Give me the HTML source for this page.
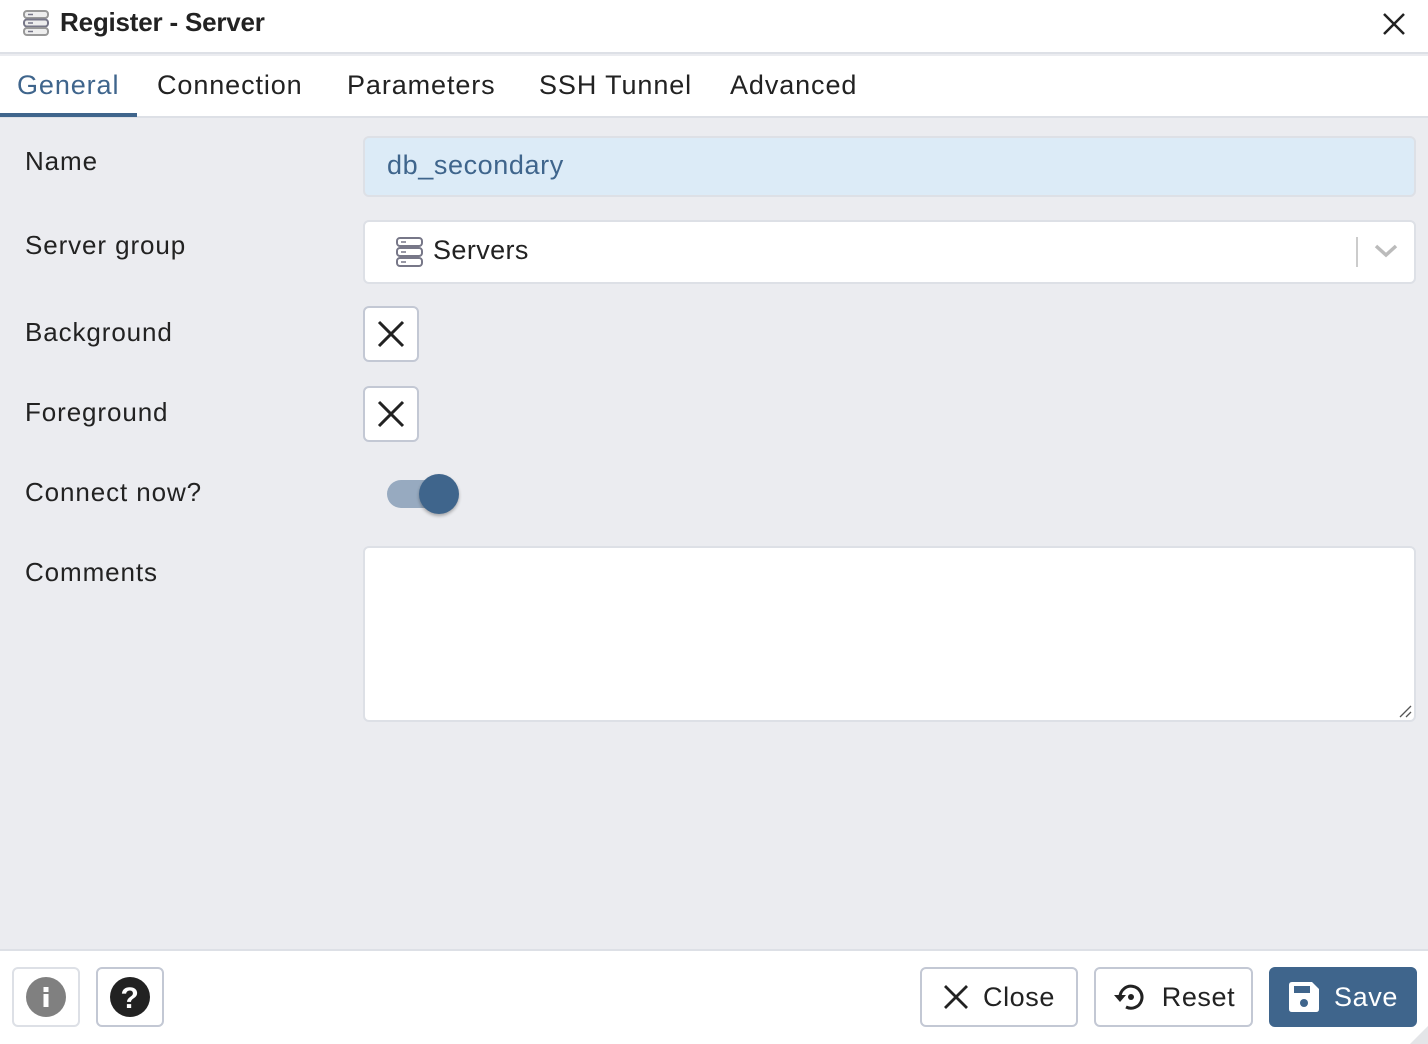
<!DOCTYPE html>
<html><head><meta charset="utf-8"><style>
*{box-sizing:border-box;margin:0;padding:0}
body{width:1428px;height:1044px;overflow:hidden;font-family:"Liberation Sans",sans-serif;color:#222;background:#ebecf0;position:relative}
.abs{position:absolute}
.lbl{position:absolute;left:25px;font-size:26px;color:#222;letter-spacing:0.9px}
.tab{position:absolute;top:70px;font-size:27px;letter-spacing:0.9px}
.box{position:absolute;background:#fff;border:2px solid #dde0e6;border-radius:6px}
.btn{position:absolute;top:967px;height:60px;background:#fff;border:2px solid #c3c8d4;border-radius:6px;font-size:27px;display:flex;align-items:center;justify-content:center;gap:14px;color:#222;letter-spacing:0.6px}
</style></head><body>
<div class="abs" style="left:0;top:0;width:1428px;height:54px;background:#fff;border-bottom:2px solid #dde0e6"></div>
<svg class="abs" style="left:22px;top:9px" width="28" height="28" viewBox="0 0 28 28"><g fill="#eee" stroke="#999" stroke-width="2"><rect x="2" y="2" width="24" height="7" rx="3"/><rect x="2" y="10.5" width="24" height="7" rx="3" stroke="#778"/><rect x="2" y="19" width="24" height="7" rx="3"/></g><g stroke="#778" stroke-width="1.5"><line x1="6" y1="5.5" x2="11" y2="5.5"/><line x1="6" y1="14" x2="11" y2="14"/><line x1="6" y1="22.5" x2="11" y2="22.5"/></g></svg>
<div class="abs" style="left:60px;top:7px;font-size:26px;font-weight:bold;letter-spacing:-0.2px">Register - Server</div>
<svg class="abs" style="left:1382px;top:12px" width="24" height="24" viewBox="0 0 24 24"><path d="M2 2L22 22M22 2L2 22" stroke="#222" stroke-width="2.5"/></svg>
<div class="abs" style="left:0;top:56px;width:1428px;height:62px;background:#fff;border-bottom:2px solid #dde0e6"></div>
<div class="abs" style="left:0;top:113px;width:137px;height:4px;background:#3f658c"></div>
<div class="tab" style="left:17px;color:#3f658c">General</div>
<div class="tab" style="left:157px">Connection</div>
<div class="tab" style="left:347px">Parameters</div>
<div class="tab" style="left:539px">SSH Tunnel</div>
<div class="tab" style="left:730px">Advanced</div>

<div class="lbl" style="top:146px">Name</div>
<div class="box" style="left:363px;top:136px;width:1053px;height:61px;background:#dcebf7"></div>
<div class="abs" style="left:387px;top:150px;font-size:27px;color:#3f658c;letter-spacing:0.6px">db_secondary</div>

<div class="lbl" style="top:230px">Server group</div>
<div class="box" style="left:363px;top:220px;width:1053px;height:64px"></div>
<svg class="abs" style="left:396px;top:237px" width="27" height="30" viewBox="0 0 27 30"><g fill="#fff" stroke="#778" stroke-width="2"><rect x="1" y="1" width="25" height="8" rx="3"/><rect x="1" y="11" width="25" height="8" rx="3"/><rect x="1" y="21" width="25" height="8" rx="3"/></g><g stroke="#778" stroke-width="1.5"><line x1="5" y1="5" x2="10" y2="5"/><line x1="5" y1="15" x2="10" y2="15"/><line x1="5" y1="25" x2="10" y2="25"/></g></svg>
<div class="abs" style="left:433px;top:235px;font-size:27px;letter-spacing:0.4px">Servers</div>
<div class="abs" style="left:1356px;top:237px;width:2px;height:30px;background:#ccc"></div>
<svg class="abs" style="left:1373px;top:243px" width="26" height="16" viewBox="0 0 26 16"><path d="M3 3L13 12L23 3" fill="none" stroke="#bbb" stroke-width="3.5"/></svg>

<div class="lbl" style="top:317px">Background</div>
<div class="box" style="left:363px;top:306px;width:56px;height:56px;border-color:#c3c8d4"></div>
<svg class="abs" style="left:377px;top:320px" width="28" height="28" viewBox="0 0 28 28"><path d="M2 2L26 26M26 2L2 26" stroke="#222" stroke-width="3"/></svg>
<div class="lbl" style="top:397px">Foreground</div>
<div class="box" style="left:363px;top:386px;width:56px;height:56px;border-color:#c3c8d4"></div>
<svg class="abs" style="left:377px;top:400px" width="28" height="28" viewBox="0 0 28 28"><path d="M2 2L26 26M26 2L2 26" stroke="#222" stroke-width="3"/></svg>

<div class="lbl" style="top:477px">Connect now?</div>
<div class="abs" style="left:387px;top:480px;width:64px;height:28px;border-radius:14px;background:#97aac0"></div>
<div class="abs" style="left:419px;top:474px;width:40px;height:40px;border-radius:50%;background:#3f658c;box-shadow:0 2px 3px rgba(0,0,0,.3)"></div>

<div class="lbl" style="top:557px">Comments</div>
<div class="box" style="left:363px;top:546px;width:1053px;height:176px"></div>
<svg class="abs" style="left:1398px;top:704px" width="14" height="14"><path d="M2 13L13 2M8 13L13 8" stroke="#555" stroke-width="1.3"/></svg>

<div class="abs" style="left:0;top:949px;width:1428px;height:95px;background:#fff;border-top:2px solid #dde0e6"></div>
<div class="btn" style="left:12px;width:68px;border-color:#dde0e6"><svg width="40" height="40" viewBox="0 0 40 40"><circle cx="20" cy="20" r="20" fill="#808080"/><rect x="17.5" y="17" width="5" height="13" fill="#fff"/><rect x="17.5" y="10" width="5" height="5" fill="#fff"/></svg></div>
<div class="btn" style="left:96px;width:68px"><svg width="40" height="40" viewBox="0 0 40 40"><circle cx="20" cy="20" r="20" fill="#222"/><text x="20" y="31" text-anchor="middle" font-family="Liberation Sans" font-weight="bold" font-size="30" fill="#fff">?</text></svg></div>
<div class="btn" style="left:920px;width:158px"><svg width="26" height="26" viewBox="0 0 26 26"><path d="M2 2L24 24M24 2L2 24" stroke="#222" stroke-width="2.8"/></svg>Close</div>
<div class="btn" style="left:1094px;width:159px"><svg width="36" height="32" viewBox="0 0 36 32"><path d="M8 16A11 11 0 1 1 14 26" fill="none" stroke="#222" stroke-width="3"/><path d="M2 14L8 21L14 14Z" fill="#222"/><circle cx="19" cy="16" r="3" fill="#222"/></svg>Reset</div>
<div class="btn" style="left:1269px;width:148px;background:#3f658c;border-color:#3f658c;color:#fff"><svg width="32" height="32" viewBox="0 0 32 32"><path d="M1 4Q1 1 4 1H24L31 8V28Q31 31 28 31H4Q1 31 1 28Z" fill="#fff"/><rect x="6" y="5" width="16" height="7" fill="#3f658c"/><circle cx="16" cy="22" r="4" fill="#3f658c"/></svg>Save</div>
<svg class="abs" style="left:1410px;top:1026px" width="18" height="18"><path d="M18 0V18H0Z" fill="#e4e5e8"/></svg>
</body></html>
